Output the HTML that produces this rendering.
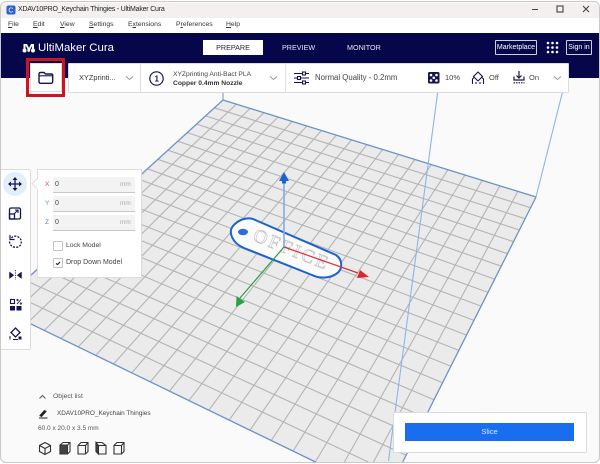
<!DOCTYPE html>
<html><head><meta charset="utf-8"><style>
html,body{margin:0;padding:0;background:#fff;width:600px;height:464px;overflow:hidden}
#r{position:relative;width:600px;height:464px;overflow:hidden;background:#fff;font-family:"Liberation Sans",sans-serif;color:#23234a}
#w{position:absolute;left:0;top:1px;width:598px;height:460px;border:1px solid #c9c9c9;border-radius:6px;background:#fafafa;overflow:hidden}
.a{position:absolute;white-space:nowrap}
.p{position:absolute;background:#fff;box-sizing:border-box;border:1px solid #dcdcdc}
.i{position:absolute;left:53px;width:82px;height:16px;background:#f3f3f3;border-bottom:1px solid #c8c8c8;box-sizing:border-box}
.m{font-size:6.8px;color:#333;top:21px}
u{text-decoration:underline}
</style></head><body><div id="r">
<div id="w"></div>
<div class="a" style="left:1px;top:3px;width:598px;height:15px;background:#f3f0ef;border-radius:6px 6px 0 0"></div>
<div class="a" style="left:1px;top:18px;width:598px;height:15px;background:#fff"></div>
<div class="a" style="left:1px;top:33px;width:598px;height:45px;background:#06064a"></div>
<svg class="a" style="left:6px;top:5px" width="10" height="10"><rect x=".5" y=".5" width="9" height="9" rx="2" fill="#2a62c9"/><text x="2.4" y="7.6" font-size="7" fill="#fff" font-family="Liberation Sans">C</text></svg>
<div class="a" style="left:18px;top:3px;font-size:7px;letter-spacing:-.2px;line-height:13px;color:#222">XDAV10PRO_Keychain Thingies - UltiMaker Cura</div>
<svg class="a" style="left:525px;top:3px" width="75" height="15" fill="none" stroke="#444" stroke-width="1"><path d="M7 6.5h6"/><rect x="32" y="3" width="6" height="6" stroke-width="1.1"/><path d="M58 3l6 6M64 3l-6 6" stroke-width="1.1"/></svg>
<div class="a m" style="left:8px"><u>F</u>ile</div>
<div class="a m" style="left:33px"><u>E</u>dit</div>
<div class="a m" style="left:60px"><u>V</u>iew</div>
<div class="a m" style="left:89px"><u>S</u>ettings</div>
<div class="a m" style="left:128px">E<u>x</u>tensions</div>
<div class="a m" style="left:176px">P<u>r</u>eferences</div>
<div class="a m" style="left:226px"><u>H</u>elp</div>
<svg class="a" style="left:22px;top:43px" width="14" height="10" fill="#fff"><circle cx="2.5" cy="7.5" r="2"/><circle cx="11" cy="7.5" r="2"/><circle cx="6.7" cy="7.5" r="1.4"/><rect x="1.5" y="1" width="2" height="6"/><rect x="10" y="1" width="2" height="6"/><path d="M3 1h2l2 4 2-4h2L8 7H6z"/></svg>
<div class="a" style="left:38px;top:40px;font-size:11.4px;line-height:16px;color:#fff">UltiMaker Cura</div>
<div class="a" style="left:203px;top:40px;width:60px;height:15px;background:#fff;color:#23234a;font-size:7.2px;line-height:16px;text-align:center">PREPARE</div>
<div class="a" style="left:282px;top:40px;font-size:7.2px;line-height:16px;color:#e8e8f0">PREVIEW</div>
<div class="a" style="left:347px;top:40px;font-size:7.2px;line-height:16px;color:#e8e8f0">MONITOR</div>
<div class="a" style="left:495px;top:40px;width:42px;height:15px;box-sizing:border-box;border:1px solid #cfd0e0;border-radius:1px;color:#fff;font-size:7px;line-height:13px;text-align:center">Marketplace</div>
<svg class="a" style="left:546px;top:41px" width="13" height="13" fill="#fff"><circle cx="2" cy="2" r="1.3"/><circle cx="6.5" cy="2" r="1.3"/><circle cx="11" cy="2" r="1.3"/><circle cx="2" cy="6.5" r="1.3"/><circle cx="6.5" cy="6.5" r="1.3"/><circle cx="11" cy="6.5" r="1.3"/><circle cx="2" cy="11" r="1.3"/><circle cx="6.5" cy="11" r="1.3"/><circle cx="11" cy="11" r="1.3"/></svg>
<div class="a" style="left:566px;top:40px;width:26px;height:15px;box-sizing:border-box;border:1px solid #cfd0e0;border-radius:1px;color:#fff;font-size:7px;line-height:13px;text-align:center">Sign in</div>

<svg id="g" class="a" style="left:0;top:0" width="600" height="464" fill="none"></svg>

<svg class="a" style="left:0;top:0" width="600" height="464" fill="none">
<path d="M438 90L388.500 461M563 90L536 197" stroke="#8db4ea" stroke-width="1.100"/>
<path d="M223 92V100" stroke="#6e92c8"/>
<path d="M253 219L336 255C343 260 343 270 336 274C330 278 320 279 312 275L244 248C232 243 228 232 233 226C238 220 246 217 253 219Z" fill="#fbfbfb" stroke="#1c62d0" stroke-width="2"/>
<ellipse cx="243" cy="232" rx="5" ry="3.200" fill="#2c6fd6"/>
<text transform="translate(252,240) rotate(22)" font-family="Liberation Serif" font-size="19" letter-spacing="2.600" fill="#fff" stroke="#c4c4c4" stroke-width=".7">OFFICE</text>
<path d="M284 247V182" stroke="#7fabea" stroke-width="1.600"/>
<path d="M284 172l5 9h-3v2.500h-4v-2.500h-3z" fill="#1d62d2"/>
<path d="M284 247L358 273" stroke="#d5333a" stroke-width="1.200"/>
<path d="M369 277L357 278 360 270z" fill="#e0262b"/>
<path d="M284 247L240 298" stroke="#2f9a48" stroke-width="1.200"/>
<path d="M236 307L236.500 296 245 302z" fill="#27a244"/>
</svg>

<div class="p" style="left:30px;top:63px;width:32px;height:29px"></div>
<div class="a" style="left:26px;top:58px;width:39px;height:39px;box-sizing:border-box;border:3px solid #cf1420"></div>
<svg class="a" style="left:38px;top:71px" width="16" height="14" fill="none" stroke="#16164f" stroke-width="1.400"><path d="M1 3C1 2 1.500 1.500 2.500 1.500H6L7.500 3H13C14 3 14.700 3.500 14.700 4.500V10.500C14.700 11.500 14 12.300 13 12.300H2.500C1.500 12.300 1 11.500 1 10.500Z"/><path d="M1 4.800H14.500" stroke-width="1.100"/></svg>
<div class="p" style="left:68px;top:63px;width:501px;height:30px;border-radius:1px"></div>
<div class="a" style="left:140px;top:64px;width:1px;height:28px;background:#e2e2e2"></div>
<div class="a" style="left:285px;top:64px;width:1px;height:28px;background:#e2e2e2"></div>
<div class="a" style="left:79px;top:72px;font-size:7.400px;line-height:12px;color:#333">XYZprinti...</div>
<svg class="a" style="left:125px;top:75px" width="10" height="7" fill="none" stroke="#999"><path d="M1 1.500l3.500 3 3.500-3"/></svg>
<svg class="a" style="left:148px;top:70px" width="17" height="17" fill="none"><circle cx="8.500" cy="8.500" r="6.700" stroke="#16164f" stroke-width="1.200"/><text x="6.500" y="11.500" font-size="8" font-weight="bold" fill="#16164f" stroke="none" font-family="Liberation Sans">1</text></svg>
<div class="a" style="left:173px;top:71px;font-size:6.700px;line-height:8px;color:#444">XYZprinting Anti-Bact PLA</div>
<div class="a" style="left:173px;top:80px;font-size:6.700px;line-height:8px;font-weight:bold;color:#333">Copper 0.4mm Nozzle</div>
<svg class="a" style="left:269px;top:75px" width="10" height="7" fill="none" stroke="#999"><path d="M1 1.500l3.500 3 3.500-3"/></svg>
<svg class="a" style="left:293px;top:71px" width="17" height="14" fill="none" stroke="#16164f" stroke-width="1.100"><path d="M1 2.500H9M13 2.500H16M1 7H4M8 7H16M1 11.500H9M13 11.500H16"/><rect x="9.500" y="1" width="3" height="3"/><rect x="4.500" y="5.500" width="3" height="3"/><rect x="9.500" y="10" width="3" height="3"/></svg>
<div class="a" style="left:315px;top:72px;font-size:7.800px;line-height:12px;color:#444">Normal Quality - 0.2mm</div>
<svg class="a" style="left:428px;top:72px" width="12" height="12"><rect width="11.500" height="11.500" rx="1.500" fill="#16164f"/><g fill="#fff"><circle cx="3" cy="3" r="1.300"/><circle cx="8.500" cy="3" r="1.300"/><circle cx="3" cy="8.500" r="1.300"/><circle cx="8.500" cy="8.500" r="1.300"/><circle cx="5.750" cy="5.750" r="1.300"/></g></svg>
<div class="a" style="left:445px;top:72px;font-size:7.500px;line-height:12px;color:#444">10%</div>
<svg class="a" style="left:471px;top:71px" width="14" height="14" fill="none" stroke="#16164f" stroke-width="1.100"><path d="M7 1L11.500 5.500 7 10 2.500 5.500Z"/><path d="M1.500 13V8L3.500 6M12.500 13V8L10.500 6M5 11V13M9 11V13"/></svg>
<div class="a" style="left:489px;top:72px;font-size:7.500px;line-height:12px;color:#444">Off</div>
<svg class="a" style="left:512px;top:70px" width="14" height="15" fill="none" stroke="#16164f" stroke-width="1.200"><path d="M7 1V7.500M4.500 5.500L7 8 9.500 5.500M2 6.500V10H12V6.500"/><path d="M1.500 12.800H12.500" stroke-dasharray="1.500 1"/></svg>
<div class="a" style="left:529px;top:72px;font-size:7.500px;line-height:12px;color:#444">On</div>
<svg class="a" style="left:553px;top:75px" width="10" height="7" fill="none" stroke="#999"><path d="M1 1.500l3.500 3 3.500-3"/></svg>

<div class="p" style="left:1px;top:169px;width:30px;height:181px;border-radius:0 2px 2px 0;border-left:0"></div>
<div class="a" style="left:3px;top:172px;width:24px;height:24px;border-radius:50%;background:#e3eefb"></div>
<svg class="a" style="left:4px;top:172px" width="24" height="176" fill="none" stroke="#16164f" stroke-width="1.300">
<path d="M11 6V18M5 12H17" /><path d="M11 5l2.500 3h-5zM11 19l2.500-3h-5zM4 12l3-2.500v5zM18 12l-3-2.500v5z" fill="#16164f" stroke="none"/>
<rect x="5.500" y="36" width="11" height="11" rx="1.500"/><rect x="5.500" y="42" width="5" height="5"/><path d="M10 42L14 38M11 38H14V41" stroke-width="1.100"/>
<path d="M7.500 66C9 64 12 63.500 14.500 65C17.500 67 18 70 16.500 73C15 75.500 11 76 8.500 74.500C6.500 73.200 5.500 71.500 5.500 69.500" stroke-dasharray="2 1.300"/><path d="M6 63V67.500H10.500" stroke-width="1.200"/>
<path d="M5.500 100V106.500L9.800 103.200Z" fill="#16164f" stroke-width=".5"/><path d="M17.500 100V106.500L13.200 103.200Z" fill="#16164f" stroke-width=".5"/><path d="M11.500 98V108" stroke-width=".8" stroke-dasharray="1.200 1.200"/>
<rect x="6.500" y="127.500" width="4" height="4" stroke-width="1.100"/><rect x="6" y="134" width="5" height="4.500" fill="#16164f" stroke="none"/><rect x="12.500" y="134" width="5" height="4.500" fill="#16164f" stroke="none"/><path d="M13 132L17 127.500" stroke-width=".9"/><circle cx="13.500" cy="128" r=".7" stroke-width=".8"/><circle cx="16.800" cy="131.500" r=".7" stroke-width=".8"/>
<path d="M11.500 156L16 160.500 11.500 165 7 160.500Z"/><path d="M6 167.500V164M9 167.500H14" stroke-width="1"/><rect x="14.500" y="164.500" width="3" height="3" fill="#16164f" stroke="none"/>
</svg>

<div class="a" style="left:33px;top:180px;width:7px;height:7px;background:#fff;transform:rotate(45deg);border-left:1px solid #ddd;border-bottom:1px solid #ddd;box-sizing:border-box"></div>
<div class="p" style="left:37px;top:169px;width:105px;height:109px;border-left:0"></div>
<div class="a" style="left:37px;top:169px;width:1px;height:10px;background:#ddd"></div>
<div class="a" style="left:37px;top:189px;width:1px;height:89px;background:#ddd"></div>
<div class="i" style="top:177px"></div><div class="i" style="top:196px"></div><div class="i" style="top:215px"></div>
<div class="a" style="left:45px;top:180px;font-size:6.500px;line-height:10px;color:#d8485a">X</div>
<div class="a" style="left:45px;top:199px;font-size:6.500px;line-height:10px;color:#5bab67">Y</div>
<div class="a" style="left:45px;top:218px;font-size:6.500px;line-height:10px;color:#4f7fd8">Z</div>
<div class="a" style="left:55px;top:180px;font-size:7px;line-height:10px;color:#444">0</div>
<div class="a" style="left:55px;top:199px;font-size:7px;line-height:10px;color:#444">0</div>
<div class="a" style="left:55px;top:218px;font-size:7px;line-height:10px;color:#444">0</div>
<div class="a" style="left:120px;top:180px;font-size:6.500px;line-height:10px;color:#aaa">mm</div>
<div class="a" style="left:120px;top:199px;font-size:6.500px;line-height:10px;color:#aaa">mm</div>
<div class="a" style="left:120px;top:218px;font-size:6.500px;line-height:10px;color:#aaa">mm</div>
<div class="a" style="left:53px;top:241px;width:10px;height:10px;box-sizing:border-box;border:1px solid #c4c4c4;border-radius:1px;background:#fff"></div>
<div class="a" style="left:53px;top:258px;width:10px;height:10px;box-sizing:border-box;border:1px solid #c4c4c4;border-radius:1px;background:#fff"></div>
<svg class="a" style="left:55px;top:260px" width="6" height="6" fill="none" stroke="#222" stroke-width="1.200"><path d="M1 3.500L2.500 4.500 5 2"/></svg>
<div class="a" style="left:66px;top:241px;font-size:6.800px;line-height:10px;color:#444">Lock Model</div>
<div class="a" style="left:66px;top:258px;font-size:7px;line-height:10px;color:#444">Drop Down Model</div>

<svg class="a" style="left:38px;top:393px" width="10" height="8" fill="none" stroke="#555"><path d="M1.500 5.500L4.500 2.500 7.500 5.500"/></svg>
<div class="a" style="left:53px;top:392px;font-size:6.800px;line-height:10px;color:#555">Object list</div>
<svg class="a" style="left:38px;top:408px" width="11" height="11" fill="none" stroke="#222"><path d="M2 7.500L6.500 2.500 8 3.500 3.500 8.500Z" fill="#222"/><path d="M1 10H9.500"/></svg>
<div class="a" style="left:57px;top:409px;font-size:6.400px;line-height:10px;color:#444">XDAV10PRO_Keychain Thingies</div>
<div class="a" style="left:38px;top:424px;font-size:6.500px;line-height:10px;color:#555">60.0 x 20.0 x 3.5 mm</div>
<svg class="a" style="left:38px;top:441px" width="90" height="15" fill="none" stroke="#333" stroke-width="1.100">
<path d="M7 1.500L12.500 4.500V10.500L7 13.500 1.500 10.500V4.500ZM1.500 4.500L7 7.500 12.500 4.500M7 7.500V13.500"/>
<path d="M22 4L25 1.500H32V10.500L29.500 13H22Z" fill="#fff"/><path d="M22 4H29.500V13H22Z" fill="#444"/><path d="M29.500 4L32 1.500"/>
<path d="M40 4.500L43 1.500H50V10.500L47.500 13H40ZM40 4.500H47.500V13M47.500 4.500L50 1.500"/>
<path d="M58 1.500H64L68 4.500V13H60.500L58 10.500Z"/><path d="M58 1.500V10.500L60.500 13V4.500Z" fill="#444"/><path d="M60.500 4.500H68"/>
<path d="M76 4.500L79 1.500H86V10.500L83.500 13H76ZM76 4.500H83.500V13M83.500 4.500L86 1.500"/>
</svg>

<div class="p" style="left:393px;top:412px;width:194px;height:41px;border-radius:1px"></div>
<div class="a" style="left:405px;top:423px;width:169px;height:18px;background:#196ef0;color:#dce8fc;font-size:7.500px;line-height:18px;text-align:center">Slice</div>
</div>
<script>
(function(){
var P=[[223,100],[536,197],[385.6,496],[-4,307]];
var x0=P[0][0],y0=P[0][1],x1=P[1][0],y1=P[1][1],x2=P[2][0],y2=P[2][1],x3=P[3][0],y3=P[3][1];
var dx1=x1-x2,dx2=x3-x2,sx=x0-x1+x2-x3,dy1=y1-y2,dy2=y3-y2,sy=y0-y1+y2-y3;
var den=dx1*dy2-dx2*dy1,g=(sx*dy2-dx2*sy)/den,h=(dx1*sy-sx*dy1)/den;
var a=x1-x0+g*x1,b=x3-x0+h*x3,d=y1-y0+g*y1,e=y3-y0+h*y3;
function m(u,v){var w=g*u+h*v+1;return [(a*u+b*v+x0)/w,(d*u+e*v+y0)/w];}
function seg(A,B){
  var t0=0,t1=1,dx=B[0]-A[0],dy=B[1]-A[1],c=[[-dx,A[0]-1],[dx,599-A[0]],[-dy,A[1]-1],[dy,462-A[1]]];
  for(var i=0;i<4;i++){var p=c[i][0],q=c[i][1];
    if(p===0){if(q<0)return '';}
    else{var r=q/p;if(p<0){if(r>t1)return '';if(r>t0)t0=r;}else{if(r<t0)return '';if(r<t1)t1=r;}}}
  return 'M'+(A[0]+t0*dx).toFixed(1)+' '+(A[1]+t0*dy).toFixed(1)+'L'+(A[0]+t1*dx).toFixed(1)+' '+(A[1]+t1*dy).toFixed(1);
}
var s='<path d="M223 100L536 197 403 462 315.500 462 1 309.400 1 302.400Z" fill="#ebebeb"/>',t='';
for(var i=1;i<20;i++){var f=i/20;t+=seg(m(f,0),m(f,1))+seg(m(0,f),m(1,f));}
s+='<path d="'+t+'" stroke="#b4b4b4" stroke-width="1.100"/>';
s+='<path d="'+seg(P[0],P[1])+seg(P[1],P[2])+seg(P[2],P[3])+seg(P[3],P[0])+'" stroke="#6e92c8" stroke-width="1.300"/>';
document.getElementById('g').innerHTML=s;
})();
</script>
</body></html>
